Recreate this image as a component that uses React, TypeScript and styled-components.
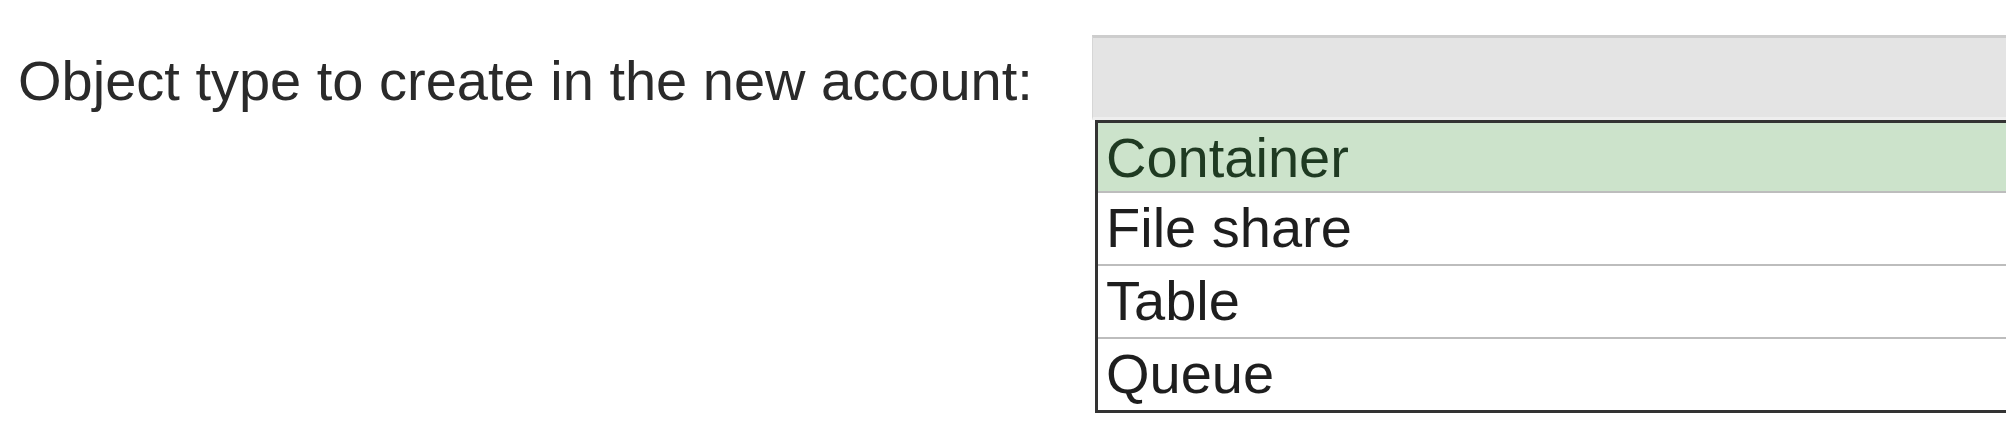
import React from "react";
import styled, { createGlobalStyle } from "styled-components";

const GlobalStyle = createGlobalStyle`
  html, body {
    margin: 0;
    padding: 0;
    background: #ffffff;
    overflow: hidden;
  }
  body {
    font-family: "Liberation Sans", Arial, sans-serif;
  }
`;

const Page = styled.div`
  display: grid;
  grid-template-columns: 1074px 1000px;
  align-items: start;
  padding: 35px 0 0 18px;
  width: 2006px;
  height: 426px;
  box-sizing: border-box;
`;

const Label = styled.div`
  margin-top: 18px;
  font-size: 56px;
  line-height: 56px;
  color: #2a2a2a;
  white-space: nowrap;
`;

const Select = styled.div`
  display: flex;
  flex-direction: column;
`;

const Header = styled.div`
  height: 79px;
  background: #e4e4e4;
  border-top: 3px solid #cdcdcd;
  border-bottom: 3px solid #eeeeee;
  border-left: 1px solid #d6d6d6;
`;

const List = styled.div`
  margin-left: 3px;
  border: 3px solid #333333;
  border-right: none;
  display: flex;
  flex-direction: column;
`;

const Option = styled.div<{ $selected?: boolean; $height: number; $last?: boolean }>`
  height: ${(p) => p.$height}px;
  box-sizing: border-box;
  padding: 7px 0 0 8px;
  font-size: 56px;
  line-height: 56px;
  white-space: nowrap;
  color: ${(p) => (p.$selected ? "#1f3a22" : "#1e1e1e")};
  background: ${(p) => (p.$selected ? "#cce3cb" : "#ffffff")};
  border-bottom: ${(p) => (p.$last ? "none" : "2px solid #bdbdbd")};
`;

const options = [
  { label: "Container", selected: true, height: 70 },
  { label: "File share", height: 73 },
  { label: "Table", height: 73 },
  { label: "Queue", height: 71, last: true },
];

export default function App() {
  return (
    <>
      <GlobalStyle />
      <Page>
        <Label>Object type to create in the new account:</Label>
        <Select>
          <Header />
          <List>
            {options.map((o) => (
              <Option
                key={o.label}
                $selected={o.selected}
                $height={o.height}
                $last={o.last}
              >
                {o.label}
              </Option>
            ))}
          </List>
        </Select>
      </Page>
    </>
  );
}
